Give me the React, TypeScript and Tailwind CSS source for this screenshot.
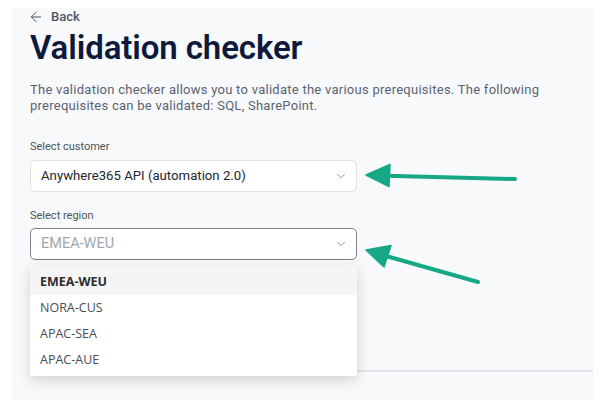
import {ArrowLeft, ChevronDown} from "lucide-react";

const regions = ["EMEA-WEU", "NORA-CUS", "APAC-SEA", "APAC-AUE"];

function Annotations() {
  return (
    <svg
      className="pointer-events-none absolute left-0 top-0"
      width={602}
      height={409}
      viewBox="0 0 602 409">
      <g fill="#16a785" stroke="#16a785" strokeLinecap="round">
        <line x1={386} y1={175.8} x2={515} y2={179} strokeWidth={4} />
        <polygon points="366,175 390,164.5 389,186.5" strokeWidth={1.5} strokeLinejoin="round" />
        <line x1={386} y1={256} x2={478} y2={282} strokeWidth={4} />
        <polygon points="366,250 391,245.5 384,267" strokeWidth={1.5} strokeLinejoin="round" />
      </g>
    </svg>
  );
}

function SelectBox({
  value,
  placeholder,
  active,
}: {
  value: string;
  placeholder?: boolean;
  active?: boolean;
}) {
  return (
    <div
      className={
        active
          ? "flex h-8 w-[327px] items-center justify-between rounded-[5px] border border-[#7b8089] bg-white pl-[10px] pr-[8px]"
          : "flex h-8 w-[327px] items-center justify-between rounded-[5px] border border-[#e0e2e7] bg-white pl-[10px] pr-[8px]"
      }>
      <span
        className={
          placeholder
            ? "text-[14.5px] text-[#a3a6ab]"
            : "text-[13.2px] text-[#23262b]"
        }>
        {value}
      </span>
      <ChevronDown size={14} strokeWidth={1.4} className="text-[#7a7d83]" />
    </div>
  );
}

export default function App() {
  return (
    <div
      className="relative h-[409px] w-[602px] overflow-hidden bg-white pl-3 pt-2"
      style={{fontFamily: "Roboto, 'Liberation Sans', sans-serif"}}>
      <div className="relative flex h-[392px] w-[581px] flex-col bg-[#f8f9fb] pl-[18px]">
        <div className="mt-px flex h-4 items-center gap-[7px] text-[#4d5563]">
          <ArrowLeft size={16} strokeWidth={1.5} className="-ml-[2px]" />
          <span className="text-[13px] font-medium leading-4">Back</span>
        </div>

        <h1 className="mt-[3px] text-[33px] font-semibold leading-[40px] tracking-[-0.1px] text-[#0e1a3b]">
          Validation checker
        </h1>

        <p className="mt-[14px] w-[540px] text-[13px] leading-4 tracking-[0.26px] text-[#5b6371]">
          The validation checker allows you to validate the various
          prerequisites. The following prerequisites can be validated: SQL,
          SharePoint.
        </p>

        <label className="mt-[26px] text-[11px] leading-[14px] text-[#4f545b]">
          Select customer
        </label>
        <div className="mt-[6px]">
          <SelectBox value="Anywhere365 API (automation 2.0)" />
        </div>

        <label className="mt-[17px] text-[11px] leading-[14px] text-[#4f545b]">
          Select region
        </label>
        <div className="mt-[5px]">
          <SelectBox value="EMEA-WEU" placeholder active />
        </div>

        <div className="mt-[110px] h-[2px] w-full bg-[#dfe2e6]" />

        <ul
          className="absolute left-[18px] top-[257px] w-[327px] rounded-[2px] bg-white pb-[3px] shadow-[0_4px_14px_rgba(0,0,0,0.16)]"
          style={{fontFamily: "'Open Sans', sans-serif"}}>
          {regions.map((r, i) =>
            i === 0 ? (
              <li
                key={r}
                className="flex h-[30px] items-center bg-[#f5f5f6] pl-[10px] pt-[4px] text-[12.5px] font-bold text-[#2b2d31]">
                {r}
              </li>
            ) : (
              <li
                key={r}
                className="flex h-[26px] items-center pl-[10px] text-[12.5px] text-[#4a4d52]">
                {r}
              </li>
            )
          )}
        </ul>
      </div>
      <Annotations />
    </div>
  );
}
